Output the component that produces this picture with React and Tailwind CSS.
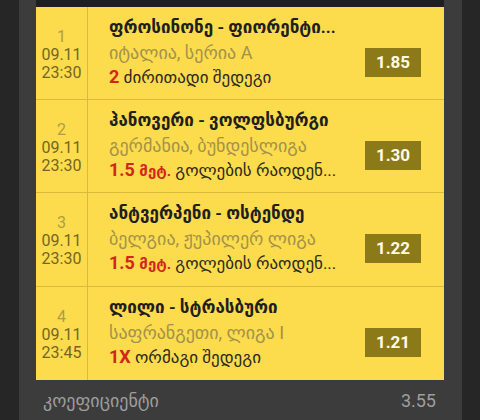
import React from "react";

const rows = [
  { n: "1", d: "09.11", t: "23:30", title: "ფროსინონე - ფიორენტი...", sub: "იტალია, სერია A", redNum: "2", redWord: "", rest: " ძირითადი შედეგი", odd: "1.85", h: "h-[93px]" },
  { n: "2", d: "09.11", t: "23:30", title: "ჰანოვერი - ვოლფსბურგი", sub: "გერმანია, ბუნდესლიგა", redNum: "1.5 ", redWord: "მეტ.", rest: " გოლების რაოდენ...", odd: "1.30", h: "h-[93px]" },
  { n: "3", d: "09.11", t: "23:30", title: "ანტვერპენი - ოსტენდე", sub: "ბელგია, ჟუპილერ ლიგა", redNum: "1.5 ", redWord: "მეტ.", rest: " გოლების რაოდენ...", odd: "1.22", h: "h-[94px]" },
  { n: "4", d: "09.11", t: "23:45", title: "ლილი - სტრასბური", sub: "საფრანგეთი, ლიგა I", redNum: "1X", redWord: "", rest: " ორმაგი შედეგი", odd: "1.21", h: "h-[93px]" },
];

export default function App() {
  return (
    <div className="w-[480px] h-[420px] bg-[#262626] flex overflow-hidden" style={{ fontFamily: "Roboto, 'DejaVu Sans', sans-serif" }}>
      <div className="ml-[19px] w-[443px] h-full bg-[#3c3c3c] pl-[17px] pr-[18px] flex flex-col">
        <div className="h-[7px] bg-[#1f1f1f] shrink-0" />
        {rows.map((r, i) => (
          <div key={i} className={`${r.h} shrink-0 flex bg-[#fcdb4d] ${i < 3 ? "border-b border-[#d8bb3a]" : ""}`}>
            <div className="w-[52px] shrink-0 border-r border-[#d8bb3a] flex flex-col items-center pt-[21px] text-[16px] leading-[18px]">
              <div className="text-[#b09d45]">{r.n}</div>
              <div className="text-[#75661e]">{r.d}</div>
              <div className="text-[#75661e]">{r.t}</div>
            </div>
            <div className="w-[250px] shrink-0 pl-[21px] pt-[8px] flex flex-col min-w-0">
              <div className="whitespace-nowrap font-bold text-[17px] leading-[25px] text-[#1f1f1f]">{r.title}</div>
              <div className="whitespace-nowrap text-[18px] leading-[25px] text-[#a3924a]">{r.sub}</div>
              <div className="whitespace-nowrap text-[17px] leading-[24px] text-[#2e2a1c]">
                <span className="font-bold text-[#d2261c] text-[18px]">{r.redNum}</span>
                {r.redWord && <span className="font-bold text-[#d2261c] text-[15px]">{r.redWord}</span>}
                {r.rest}
              </div>
            </div>
            <div className="flex-1" />
            <div className="mt-[41px] mr-[23px] w-[56px] h-[29px] bg-[#8c7a18] flex items-center justify-center text-[17px] font-bold text-[#fffbe6]">
              {r.odd}
            </div>
          </div>
        ))}
        <div className="h-[40px] shrink-0 flex items-center justify-between pl-[7px] pr-[8px] text-[18px] text-[#9e9e9e]">
          <span>კოეფიციენტი</span>
          <span>3.55</span>
        </div>
      </div>
    </div>
  );
}
